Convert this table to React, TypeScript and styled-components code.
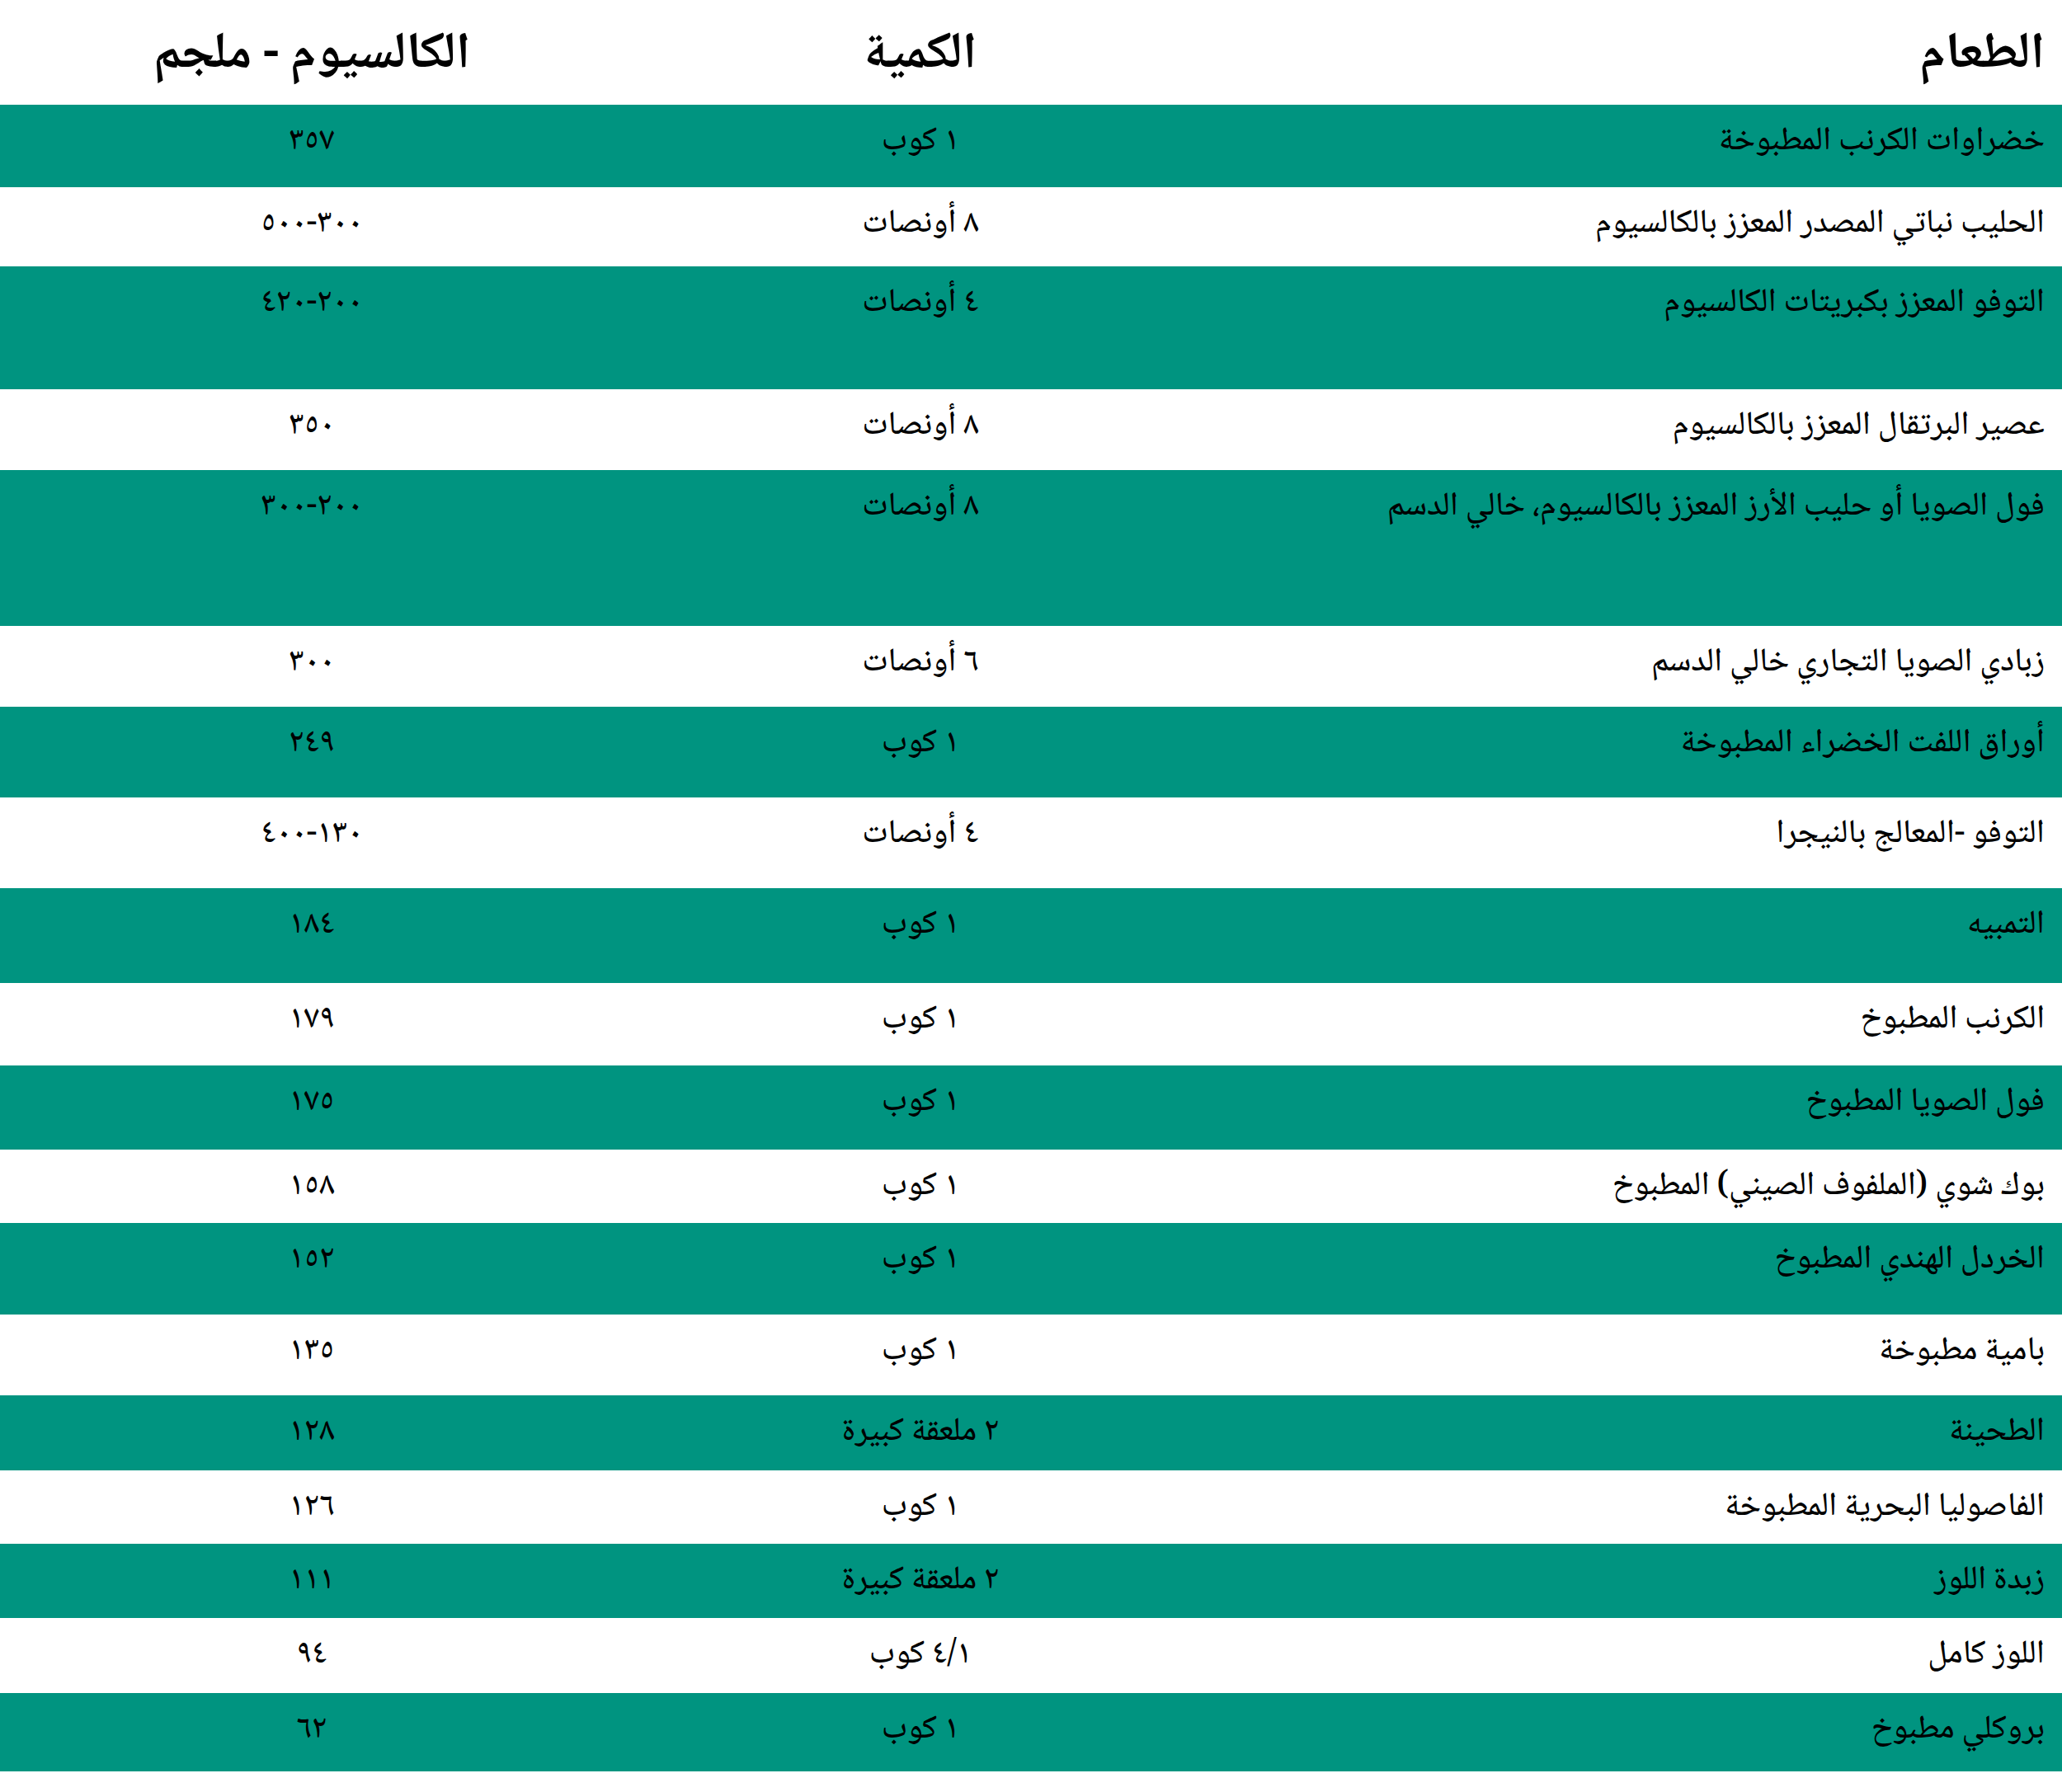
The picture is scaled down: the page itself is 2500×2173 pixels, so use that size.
import styled, { createGlobalStyle } from 'styled-components';

const GlobalStyle = createGlobalStyle`
  html, body {
    margin: 0;
    padding: 0;
    background: #ffffff;
  }
`;

const Table = styled.table`
  width: 2500px;
  border-collapse: collapse;
  table-layout: fixed;
  direction: rtl;
  font-family: "Noto Naskh Arabic", "DejaVu Sans", serif;
  color: #000;
`;

const HeadRow = styled.tr`
  height: 127px;
  background: #fff;
`;

const HeadCell = styled.th<{ $start?: boolean }>`
  font-size: 62px;
  font-weight: 700;
  line-height: 80px;
  text-align: ${p => (p.$start ? 'right' : 'center')};
  padding: 10px ${p => (p.$start ? '21px' : '0')} 0 0;
  vertical-align: middle;
`;

const Row = styled.tr<{ $green: boolean }>`
  background: ${p => (p.$green ? '#009480' : '#ffffff')};
`;

const Cell = styled.td<{ $start?: boolean }>`
  font-size: 40px;
  font-weight: 500;
  line-height: 50px;
  text-align: ${p => (p.$start ? 'right' : 'center')};
  vertical-align: top;
  padding: 20px ${p => (p.$start ? '21px' : '0')} 0 0;
  white-space: nowrap;
`;

type Food = { name: string; qty: string; mg: string; h: number };

const foods: Food[] = [
  { name: 'خضراوات الكرنب المطبوخة', qty: '١ كوب', mg: '٣٥٧', h: 100 },
  { name: 'الحليب نباتي المصدر المعزز بالكالسيوم', qty: '٨ أونصات', mg: '٣٠٠-٥٠٠', h: 96 },
  { name: 'التوفو المعزز بكبريتات الكالسيوم', qty: '٤ أونصات', mg: '٢٠٠-٤٢٠', h: 149 },
  { name: 'عصير البرتقال المعزز بالكالسيوم', qty: '٨ أونصات', mg: '٣٥٠', h: 98 },
  { name: 'فول الصويا أو حليب الأرز المعزز بالكالسيوم، خالي الدسم', qty: '٨ أونصات', mg: '٢٠٠-٣٠٠', h: 189 },
  { name: 'زبادي الصويا التجاري خالي الدسم', qty: '٦ أونصات', mg: '٣٠٠', h: 98 },
  { name: 'أوراق اللفت الخضراء المطبوخة', qty: '١ كوب', mg: '٢٤٩', h: 110 },
  { name: 'التوفو -المعالج بالنيجرا', qty: '٤ أونصات', mg: '١٣٠-٤٠٠', h: 110 },
  { name: 'التمبيه', qty: '١ كوب', mg: '١٨٤', h: 115 },
  { name: 'الكرنب المطبوخ', qty: '١ كوب', mg: '١٧٩', h: 100 },
  { name: 'فول الصويا المطبوخ', qty: '١ كوب', mg: '١٧٥', h: 102 },
  { name: 'بوك شوي (الملفوف الصيني) المطبوخ', qty: '١ كوب', mg: '١٥٨', h: 89 },
  { name: 'الخردل الهندي المطبوخ', qty: '١ كوب', mg: '١٥٢', h: 111 },
  { name: 'بامية مطبوخة', qty: '١ كوب', mg: '١٣٥', h: 98 },
  { name: 'الطحينة', qty: '٢ ملعقة كبيرة', mg: '١٢٨', h: 91 },
  { name: 'الفاصوليا البحرية المطبوخة', qty: '١ كوب', mg: '١٢٦', h: 89 },
  { name: 'زبدة اللوز', qty: '٢ ملعقة كبيرة', mg: '١١١', h: 90 },
  { name: 'اللوز كامل', qty: '٤/١ كوب', mg: '٩٤', h: 91 },
  { name: 'بروكلي مطبوخ', qty: '١ كوب', mg: '٦٢', h: 95 },
];

export default function App() {
  return (
    <>
      <GlobalStyle />
      <Table>
        <colgroup>
          <col style={{ width: 1024 }} />
          <col style={{ width: 720 }} />
          <col style={{ width: 756 }} />
        </colgroup>
        <thead>
          <HeadRow>
            <HeadCell $start>الطعام</HeadCell>
            <HeadCell>الكمية</HeadCell>
            <HeadCell>الكالسيوم - ملجم</HeadCell>
          </HeadRow>
        </thead>
        <tbody>
          {foods.map((food, index) => (
            <Row key={index} $green={index % 2 === 0} style={{ height: food.h }}>
              <Cell $start>{food.name}</Cell>
              <Cell>{food.qty}</Cell>
              <Cell>{food.mg}</Cell>
            </Row>
          ))}
        </tbody>
      </Table>
    </>
  );
}
